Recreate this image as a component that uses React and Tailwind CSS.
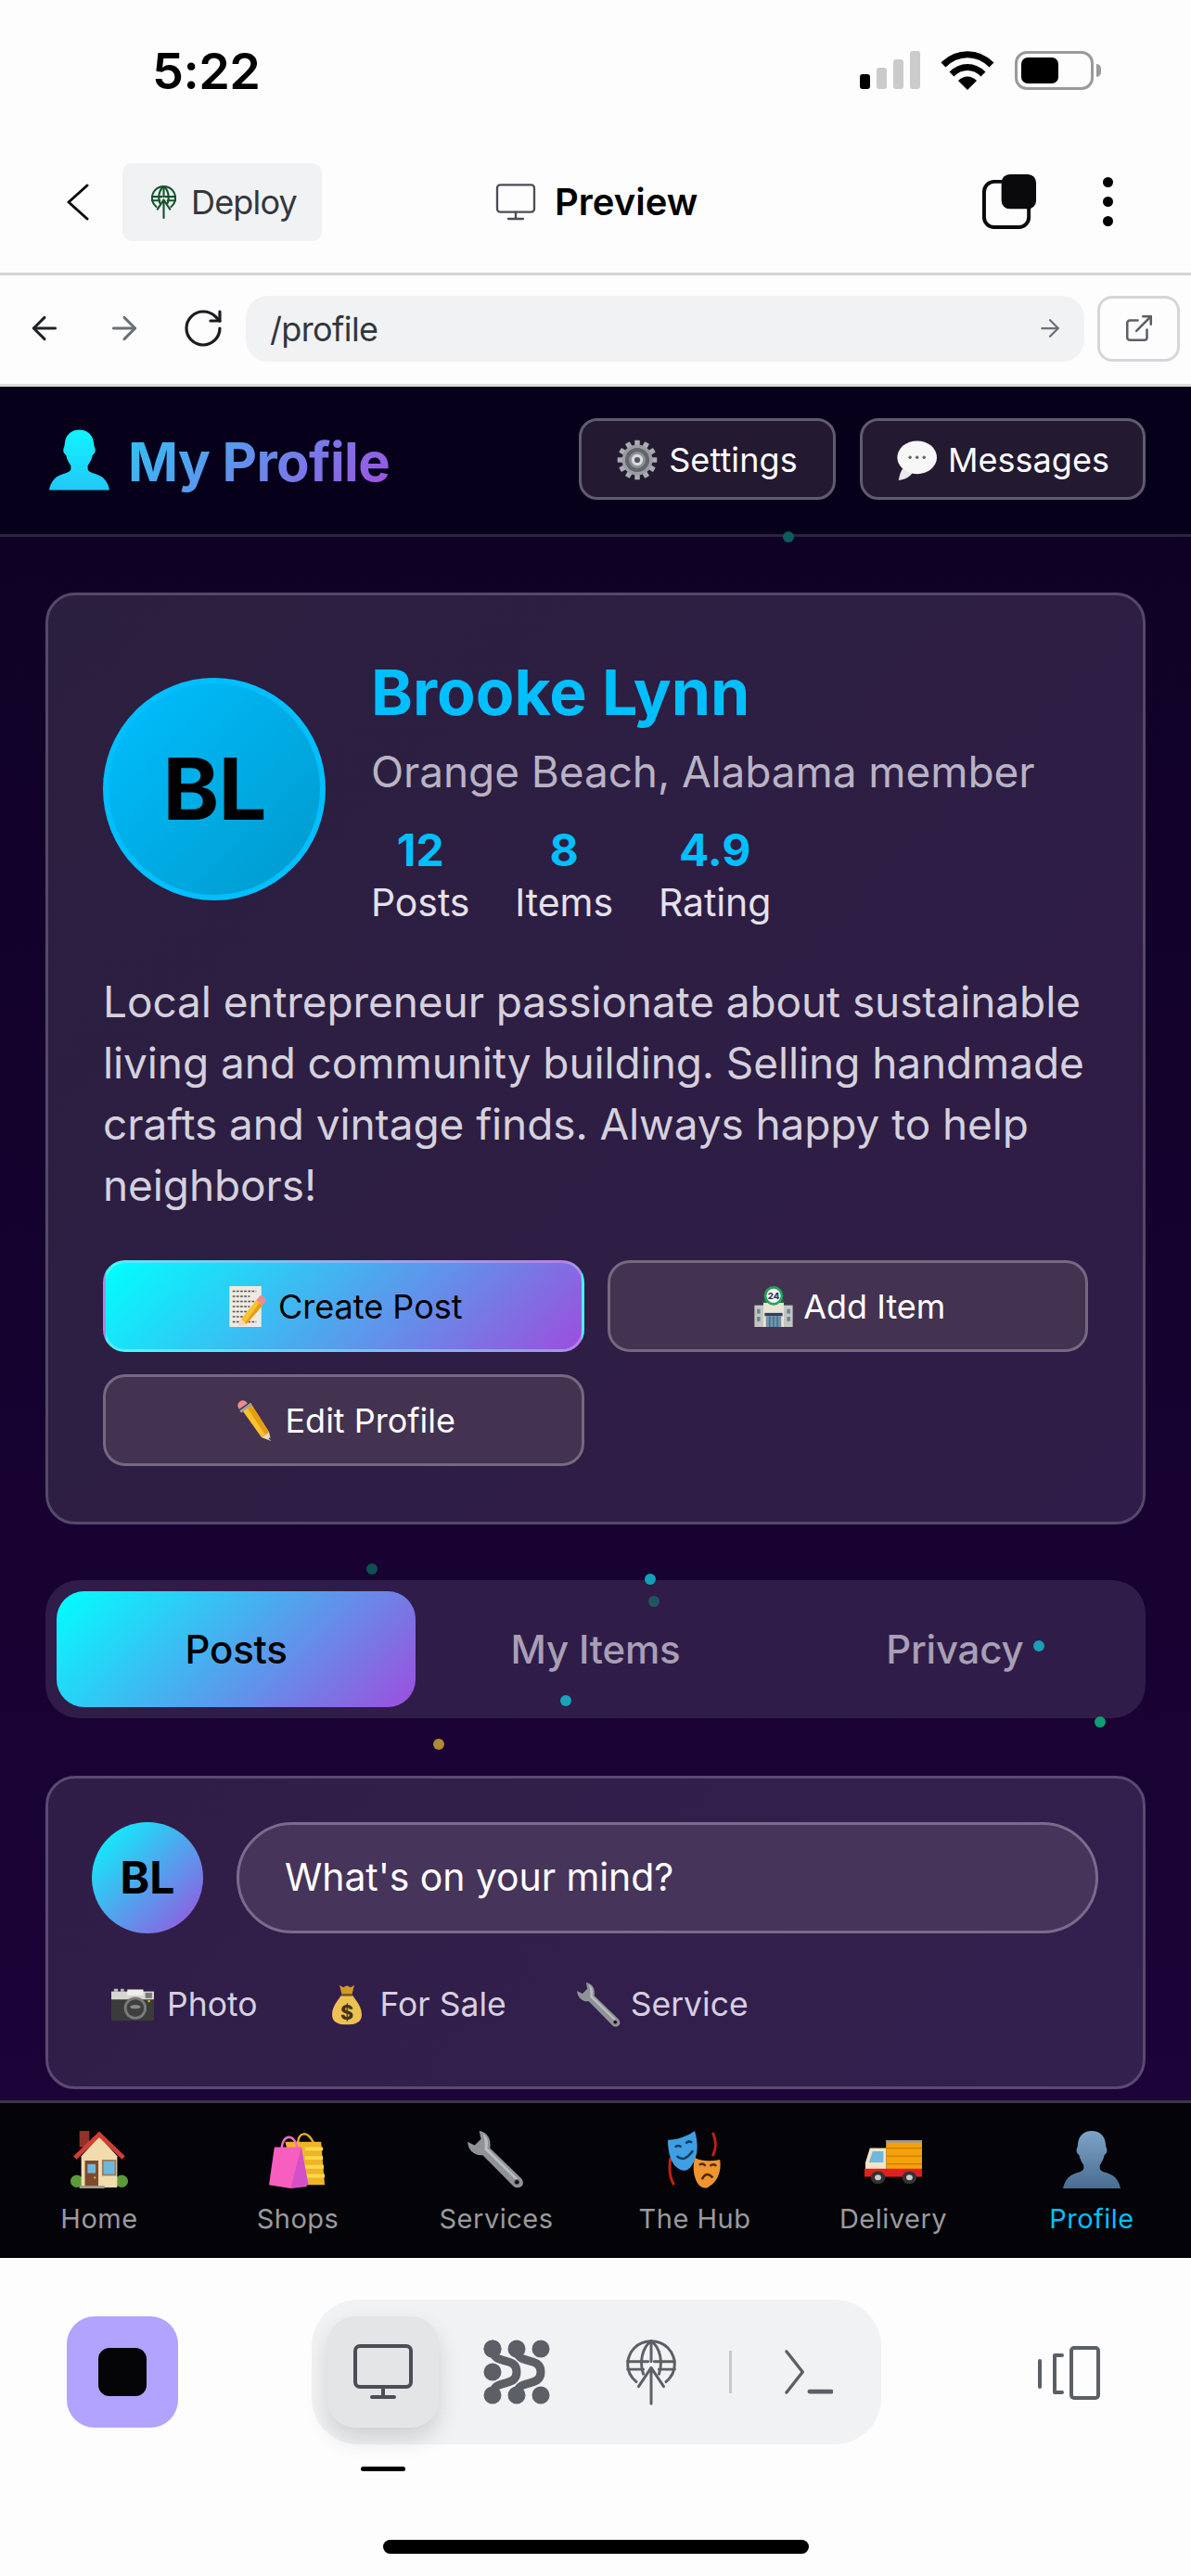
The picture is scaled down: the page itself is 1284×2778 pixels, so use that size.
import { ArrowLeft, ArrowRight, RotateCw, ExternalLink } from "lucide-react";

const Person = ({ className, from = "#10f4ff", to = "#22c8f8", id = "p" }) => (
  <svg viewBox="0 0 64 64" className={className}>
    <defs>
      <linearGradient id={id} x1="0" y1="0" x2="0" y2="1">
        <stop offset="0" stopColor={from} />
        <stop offset="1" stopColor={to} />
      </linearGradient>
    </defs>
    <path
      fill={`url(#${id})`}
      d="M32 0C23 0 17 6 16.500 15C16.500 18 15 19 15 22C15 25 17 26 18 27C19 32 21 35 23 38V42C22 46 14 46 8 50C4 53 1 58 0 64H64C63 58 60 53 56 50C50 46 42 46 41 42V38C43 35 45 32 46 27C47 26 49 25 49 22C49 19 47.500 18 47.500 15C47 6 41 0 32 0Z"
    />
  </svg>
);

const Gear = ({ className }) => (
  <svg viewBox="0 0 64 64" className={className}>
    <g fill="#a9adb2">
      {[0, 30, 60, 90, 120, 150, 180, 210, 240, 270, 300, 330].map((a) => (
        <rect key={a} x="28" y="1" width="8" height="12" rx="1" transform={`rotate(${a} 32 32)`} />
      ))}
    </g>
    <circle cx="32" cy="32" r="24" fill="#9a9ea4" />
    <circle cx="32" cy="32" r="19" fill="#63666c" />
    <circle cx="32" cy="32" r="13" fill="#8d9096" />
    <circle cx="32" cy="32" r="9" fill="#d8dade" />
    <circle cx="32" cy="32" r="4.500" fill="#55585e" />
  </svg>
);

const Bubble = ({ className }) => (
  <svg viewBox="0 0 64 64" className={className}>
    <path fill="#e9e9ec" d="M10 46C6 52 5 60 4 64C14 63 22 58 26 52Z" />
    <ellipse cx="33" cy="28" rx="31" ry="26" fill="#f7f7f8" />
    <circle cx="22" cy="28" r="2.500" fill="#666" />
    <circle cx="33" cy="28" r="2.500" fill="#666" />
    <circle cx="44" cy="28" r="2.500" fill="#666" />
  </svg>
);

const Pencil = ({ className }) => (
  <svg viewBox="0 0 64 64" className={className}>
    <path fill="#f9c22e" d="M12 16L26 6L54 50L42 58Z" />
    <path fill="#e59e12" d="M19 11L26 6L54 50L48 54Z" />
    <path fill="#f1d9b4" d="M42 58L54 50L57 64Z" />
    <path fill="#3a3a3a" d="M53 60L56 58L57 64Z" />
    <path fill="#9da1a6" d="M9 18L23 8L26 6L12 16Z" stroke="#9da1a6" strokeWidth="4" />
    <path fill="#f08a8f" d="M7 14L20 5C17 0 12 -1 8 2C4 5 4 10 7 14Z" />
  </svg>
);

const Memo = ({ className }) => (
  <svg viewBox="0 0 64 64" className={className}>
    <rect x="2" y="0" width="50" height="64" fill="#eeeae2" />
    {[8, 16, 24, 32, 40, 48, 56].map((y, i) => (
      <path key={y} d={`M7 ${y}H${i % 2 ? 34 : 44}`} stroke="#56524c" strokeWidth="2" strokeDasharray="4 2" />
    ))}
    <path fill="#f9c22e" d="M20 52L44 22L54 30L28 60Z" />
    <path fill="#e59e12" d="M27 57L49 26L54 30L28 60Z" />
    <path fill="#f08a8f" d="M44 22L50 15C54 14 59 19 59 23L54 30Z" />
    <path fill="#f1d9b4" d="M20 52L28 60L16 63Z" />
  </svg>
);

const Hotel = ({ className }) => (
  <svg viewBox="0 0 64 64" className={className}>
    <rect x="2" y="30" width="60" height="34" fill="#c3c6bd" />
    <rect x="16" y="26" width="32" height="38" fill="#e9e4d3" />
    <rect x="6" y="36" width="5" height="7" fill="#65839a" />
    <rect x="6" y="48" width="5" height="7" fill="#65839a" />
    <rect x="53" y="36" width="5" height="7" fill="#65839a" />
    <rect x="53" y="48" width="5" height="7" fill="#65839a" />
    <rect x="18" y="42" width="28" height="5" fill="#2d3f63" />
    <rect x="20" y="47" width="24" height="17" fill="#6c95ad" />
    <path d="M26 47V64M32 47V64M38 47V64" stroke="#3f5a70" strokeWidth="1.500" />
    <path d="M14 26H50L46 20H18Z" fill="#1f6a42" />
    <circle cx="32" cy="15" r="15" fill="#25a25a" />
    <circle cx="32" cy="15" r="11" fill="#f4f4f4" />
    <text x="32" y="20" textAnchor="middle" fontSize="14" fontWeight="800" fill="#2d3560" fontFamily="Inter, sans-serif">24</text>
  </svg>
);

const Camera = ({ className }) => (
  <svg viewBox="0 0 64 48" className={className}>
    <rect x="4" y="0" width="6" height="6" fill="#bbb" />
    <rect x="14" y="0" width="5" height="6" fill="#bbb" />
    <rect x="0" y="4" width="64" height="44" rx="2" fill="#3b3b3b" />
    <rect x="0" y="4" width="64" height="12" fill="#d6d6d2" />
    <rect x="24" y="1" width="24" height="9" fill="#efefe9" />
    <rect x="51" y="6" width="10" height="8" fill="#777" />
    <circle cx="36" cy="29" r="17" fill="#7b7b7b" />
    <circle cx="36" cy="29" r="13" fill="#3f3f3f" />
    <ellipse cx="36" cy="27" rx="8" ry="3" fill="#8a8a8a" />
    <rect x="55" y="17" width="3" height="3" fill="#e6b62d" />
  </svg>
);

const MoneyBag = ({ className }) => (
  <svg viewBox="0 0 48 64" className={className}>
    <path fill="#d19a2a" d="M12 0L18 4L24 1L30 4L36 0L32 16H16Z" />
    <path fill="#edc252" d="M16 15H32C38 24 48 34 48 48C48 60 38 64 24 64C10 64 0 60 0 48C0 34 10 24 16 15Z" />
    <path fill="#7b5a1c" d="M15 14H33V18H15Z" />
    <text x="24" y="56" textAnchor="middle" fontSize="32" fontWeight="800" fill="#3f3520" fontFamily="Inter, sans-serif">$</text>
  </svg>
);

const Wrench = ({ className }) => (
  <svg viewBox="0 0 64 64" className={className}>
    <path
      fill="#8f9398"
      d="M13 0C21 1 27 8 25 19L60 53C63 57 62 61 59 62.500C55 64 52 63 50 60.500L17 27C8 28 1 22 0 12L8 16L15 9Z"
    />
    <path fill="#b9bdc2" d="M17 3C22 6 24 12 22 19L57 54L54 55L19 21C20 15 19 8 17 3Z" />
    <circle cx="55" cy="57" r="2.800" fill="#140a20" stroke="#6d7075" strokeWidth="1" />
  </svg>
);

const House = ({ className }) => (
  <svg viewBox="0 0 64 64" className={className}>
    <circle cx="7" cy="56" r="7" fill="#5c9a3a" />
    <circle cx="57" cy="56" r="7" fill="#5c9a3a" />
    <rect x="10" y="0" width="11" height="18" fill="#8f3328" />
    <path fill="#f2dcae" d="M12 28L32 6L52 28V63H12Z" />
    <path fill="none" stroke="#d13f33" strokeWidth="5" d="M5 30L32 4L59 30" />
    <rect x="16" y="33" width="15" height="30" fill="#7d4a2e" />
    <rect x="19" y="37" width="9" height="10" fill="#6fb8dc" />
    <circle cx="27" cy="52" r="1.200" fill="#e2b43a" />
    <rect x="35" y="32" width="16" height="18" fill="#9a8060" />
    <rect x="37" y="34" width="12" height="14" fill="#6fb8dc" />
    <rect x="10" y="61" width="28" height="3" fill="#9b9b8f" />
  </svg>
);

const Bags = ({ className }) => (
  <svg viewBox="0 0 64 64" className={className}>
    <path fill="none" stroke="#e8a82a" strokeWidth="2.500" d="M32 14C33 2 42 -2 50 14" />
    <path fill="#f0b428" d="M18 12H58L62 60H30Z" />
    <path d="M40 20H60M40 30H60M40 40H61M40 50H62" stroke="#f7d94a" strokeWidth="4" />
    <path fill="none" stroke="#f070c0" strokeWidth="2.500" d="M14 22C14 2 30 2 32 22" />
    <path fill="#f75fbe" d="M6 18H36L42 62L24 64L0 60Z" />
    <path fill="#d44fc8" d="M36 18L44 60L24 64Z" />
  </svg>
);

const Masks = ({ className }) => (
  <svg viewBox="0 0 64 64" className={className}>
    <path d="M5 30C3 42 4 52 9 60M52 2C56 10 56 20 52 28" fill="none" stroke="#c4210f" strokeWidth="3" />
    <path fill="#3f9fe2" d="M2 10C12 10 24 6 32 0C36 14 36 26 30 36C26 44 20 46 14 42C6 38 2 24 2 10Z" />
    <path d="M10 18Q14 15 17 18M22 14Q25 10 29 13M12 28Q20 36 30 22" stroke="#123a60" strokeWidth="2.500" fill="none" />
    <path fill="#ee9430" d="M32 30C40 34 50 34 60 32C62 44 58 56 48 62C42 66 36 62 33 54C30 46 30 38 32 30Z" />
    <path d="M37 38Q41 35 44 39M49 39Q53 36 56 39M40 54Q45 44 52 52" stroke="#50280a" strokeWidth="2.500" fill="none" />
  </svg>
);

const Truck = ({ className }) => (
  <svg viewBox="0 0 64 56" preserveAspectRatio="none" className={className}>
    <rect x="24" y="0" width="40" height="42" fill="#f5a10a" />
    <path d="M24 10H64M24 20H64M24 30H64" stroke="#c97c06" strokeWidth="1.500" />
    <rect x="24" y="0" width="40" height="3" fill="#9a9a9a" />
    <path fill="#f4e3c6" d="M6 10H24V40H1V28Z" />
    <path fill="#6fb8dc" d="M9 14H21V28H5Z" />
    <path fill="#e01f1f" d="M0 36H64V46H0Z" />
    <circle cx="15" cy="47" r="8" fill="#333" />
    <circle cx="15" cy="47" r="3.500" fill="#ccc" />
    <circle cx="50" cy="47" r="8" fill="#333" />
    <circle cx="50" cy="47" r="3.500" fill="#ccc" />
  </svg>
);

const DeployGlobe = ({ className, color, sw = 4 }) => (
  <svg viewBox="0 0 64 84" className={className} fill="none" stroke={color} strokeWidth={sw} strokeLinecap="round" strokeLinejoin="round">
    <path d="M13 54C6 48 2 40 2 32C2 15 15 2 32 2C49 2 62 15 62 32C62 40 58 48 51 54" />
    <path d="M2 28H28M36 28H62M2 38H22M42 38H62" />
    <path d="M22 44C17 30 20 10 32 2C44 10 47 30 42 44" />
    <path d="M32 2V28" />
    <path d="M32 82V36M16 60L32 36L48 60" />
  </svg>
);

const Monitor = ({ className, sw = 4 }) => (
  <svg viewBox="0 0 64 60" className={className} fill="none" stroke="#4b4e55" strokeWidth={sw} strokeLinecap="round" strokeLinejoin="round">
    <rect x="2" y="2" width="60" height="44" rx="5" />
    <path d="M32 46V56M20 57H44" />
  </svg>
);

const Blobs = ({ className }) => (
  <svg viewBox="0 0 72 72" className={className} fill="none" stroke="#5c5f66" strokeLinecap="round">
    <g strokeWidth="19">
      <path d="M10 11V11.100M62 11V11.100M10 36V36.100M62 61V61.100" />
    </g>
    <g strokeWidth="9">
      <path d="M10 11C10 30 36 18 36 36C36 54 10 42 10 61" />
      <path d="M36 11C36 30 62 18 62 36C62 54 36 42 36 61" />
    </g>
    <g strokeWidth="19">
      <path d="M10 11V11.100M36 11V11.100M10 61V61.100M36 61V61.100" />
    </g>
  </svg>
);

const tabs = ["Posts", "My Items", "Privacy"];

const navItems = [
  { label: "Home", Icon: House, size: "w-[62px] h-[62px]" },
  { label: "Shops", Icon: Bags, size: "w-[62px] h-[62px]" },
  { label: "Services", Icon: Wrench, size: "w-[62px] h-[62px]" },
  { label: "The Hub", Icon: Masks, size: "w-[62px] h-[62px]" },
  { label: "Delivery", Icon: Truck, size: "w-[62px] h-[48px] mb-[4px]" },
];

const particles = [
  "left-[844px] -top-[6px] bg-[#0e5a5e]",
  "left-[395px] top-[1107px] bg-[#0e4f52]",
  "left-[695px] top-[1118px] bg-[#12a0b8]",
  "left-[699px] top-[1142px] bg-[#22545e]",
  "left-[1114px] top-[1190px] bg-[#1b9fb5]",
  "left-[604px] top-[1249px] bg-[#1aa2b8]",
  "left-[1180px] top-[1272px] bg-[#0f9f70]",
  "left-[467px] top-[1296px] bg-[#b08a35]",
];

const Stat = ({ value, label }) => (
  <div className="flex flex-col items-center">
    <div className="text-[48px] leading-[58px] font-bold text-[#00bfff]">{value}</div>
    <div className="text-[41px] leading-[54px] tracking-[-0.1px] text-[#e4e1ea]">{label}</div>
  </div>
);

export default function App() {
  return (
    <div className="w-[1284px] h-[2778px] overflow-hidden flex flex-col bg-[#fdfdfd] font-['Inter',sans-serif]">
      {/* status bar */}
      <div className="h-[165px] flex items-start justify-between pl-[164px] pr-[97px] pt-[47px]">
        <span className="text-[54px] leading-[60px] font-semibold tracking-[-0.5px] text-black">5:22</span>
        <div className="flex items-start gap-[22px] pt-[8px]">
          <div className="flex items-end gap-[7px] h-[41px]">
            <div className="w-[11px] h-[16px] rounded-[3px] bg-black" />
            <div className="w-[11px] h-[23px] rounded-[3px] bg-[#cbcbcb]" />
            <div className="w-[11px] h-[32px] rounded-[3px] bg-[#cbcbcb]" />
            <div className="w-[11px] h-[41px] rounded-[3px] bg-[#cbcbcb]" />
          </div>
          <svg viewBox="0 0 58 42" className="w-[58px] h-[42px]" fill="none" stroke="#000" strokeWidth="7">
            <path d="M3 15C18 0 40 0 55 15" />
            <path d="M12 25C22 15 36 15 46 25" />
            <path d="M19 32L29 42L39 32C33 26 25 26 19 32Z" fill="#000" stroke="none" />
          </svg>
          <div className="flex items-center">
            <div className="w-[85px] h-[42px] rounded-[13px] border-[3px] border-[#9a9a9a] p-[4px]">
              <div className="w-[40px] h-full rounded-[7px] bg-black" />
            </div>
            <div className="w-[5px] h-[14px] rounded-r-[5px] bg-[#9a9a9a] ml-[3px]" />
          </div>
        </div>
      </div>

      {/* top bar */}
      <div className="h-[132px] border-b-[3px] border-[#d4d4d4] flex items-start pt-[11px]">
        <svg viewBox="0 0 26 40" className="w-[26px] h-[40px] mt-[22px] ml-[71px]" fill="none" stroke="#0a0a0c" strokeWidth="3" strokeLinecap="round" strokeLinejoin="round">
          <path d="M23 2L3 20L23 38" />
        </svg>
        <div className="ml-[35px] w-[215px] h-[84px] rounded-[10px] bg-[#f1f2f4] flex items-center pl-[31px] gap-[16px]">
          <DeployGlobe className="w-[27px] h-[36px]" color="#14532d" sw={5} />
          <span className="text-[36px] tracking-[-0.8px] text-[#33363c]">Deploy</span>
        </div>
        <div className="ml-[187px] flex items-center gap-[20px] h-[84px]">
          <Monitor className="w-[44px] h-[40px]" sw={3.500} />
          <span className="text-[40px] font-semibold text-black">Preview</span>
        </div>
        <div className="ml-auto mr-[84px] flex items-center gap-[71px] h-[84px] mt-[-1px]">
          <svg viewBox="0 0 60 60" className="w-[59px] h-[59px]">
            <rect x="2" y="8" width="49" height="50" rx="11" fill="none" stroke="#0a0a0c" strokeWidth="4" />
            <rect x="21" y="0" width="38" height="38" rx="9" fill="#0a0a0c" />
          </svg>
          <div className="flex flex-col gap-[10px]">
            <div className="w-[11px] h-[11px] rounded-full bg-black" />
            <div className="w-[11px] h-[11px] rounded-full bg-black" />
            <div className="w-[11px] h-[11px] rounded-full bg-black" />
          </div>
        </div>
      </div>

      {/* url row */}
      <div className="h-[120px] border-b-[3px] border-[#dcdcdc] flex items-center pl-[28px] pr-[12px] pb-[3px]">
        <ArrowLeft className="w-[40px] h-[40px] text-[#1f2126]" strokeWidth={1.8} />
        <ArrowRight className="w-[40px] h-[40px] ml-[46px] text-[#6b6f76]" strokeWidth={1.8} />
        <RotateCw className="w-[48px] h-[48px] ml-[41px] text-[#1a1c20]" strokeWidth={1.6} />
        <div className="ml-[22px] w-[905px] h-[71px] rounded-[24px] bg-[#f1f2f4] flex items-center justify-between pl-[26px] pr-[22px]">
          <span className="text-[36px] tracking-[-0.6px] mt-[2px] text-[#33363c]">/profile</span>
          <ArrowRight className="w-[30px] h-[30px] text-[#6b6f76]" strokeWidth={1.8} />
        </div>
        <div className="ml-[14px] w-[89px] h-[71px] rounded-[16px] border-[3px] border-[#d4d6da] flex items-center justify-center">
          <ExternalLink className="w-[34px] h-[34px] text-[#5c5f66]" strokeWidth={1.8} />
        </div>
      </div>

      {/* app */}
      <div className="h-[2018px] flex flex-col overflow-hidden">
        <header className="h-[162px] shrink-0 border-b-[3px] border-[#2b2440] bg-[#07001a] flex items-center justify-between pl-[53px] pr-[49px] pb-[3px]">
          <div className="flex items-center gap-[20px] mt-[5px]">
            <Person className="w-[65px] h-[66px] mb-[4px]" id="headerPerson" />
            <h1 className="text-[58px] leading-[70px] font-bold tracking-[-0.6px] text-transparent bg-clip-text bg-[linear-gradient(135deg,#2ec4f5,#a050e0)]">
              My Profile
            </h1>
          </div>
          <div className="flex items-center gap-[26px]">
            <button className="w-[277px] h-[88px] pt-[2px] rounded-[20px] border-[3px] border-[#625a6e] bg-[#231a31] flex items-center justify-center gap-[12px] text-[36px] tracking-[0.1px] text-white">
              <Gear className="w-[44px] h-[44px]" />
              Settings
            </button>
            <button className="w-[308px] h-[88px] pt-[2px] rounded-[20px] border-[3px] border-[#625a6e] bg-[#231a31] flex items-center justify-center gap-[12px] text-[36px] text-white">
              <Bubble className="w-[44px] h-[44px]" />
              Messages
            </button>
          </div>
        </header>

        <main className="relative flex-1 min-h-0 bg-[linear-gradient(180deg,#0f0126,#1c0338)] px-[49px] pt-[60px]">
          {particles.map((p) => (
            <div key={p} className={`absolute z-10 w-[12px] h-[12px] rounded-full ${p}`} />
          ))}

          {/* profile card */}
          <section className="relative rounded-[32px] border-[3px] border-[#55486a] bg-[linear-gradient(135deg,#2b1f3f,#301c48)] px-[59px] pt-[60px] pb-[60px]">
            <div className="flex items-center gap-[49px]">
              <div className="w-[240px] h-[240px] shrink-0 rounded-full border-[6px] border-[#00bfff] bg-[linear-gradient(135deg,#00bfff,#0099cc)] flex items-center justify-center text-[92px] font-bold tracking-[-1px] text-black">
                BL
              </div>
              <div>
                <h2 className="text-[68px] leading-[88px] font-bold text-[#00bfff]">Brooke Lynn</h2>
                <p className="text-[46px] leading-[66px] mt-[9px] tracking-[-0.1px] text-[#b8b3c4]">Orange Beach, Alabama member</p>
                <div className="flex gap-[49px] mt-[23px]">
                  <Stat value="12" label="Posts" />
                  <Stat value="8" label="Items" />
                  <Stat value="4.9" label="Rating" />
                </div>
              </div>
            </div>

            <p className="mt-[47px] text-[46px] leading-[66px] tracking-[-0.1px] whitespace-nowrap text-[#d4d1dc]">
              Local entrepreneur passionate about sustainable<br />
              living and community building. Selling handmade<br />
              crafts and vintage finds. Always happy to help<br />
              neighbors!
            </p>

            <div className="mt-[48px] grid grid-cols-2 gap-x-[25px] gap-y-[24px]">
              <button className="h-[99px] rounded-[24px] border-[3px] border-[#ffffff44] bg-[linear-gradient(135deg,#00ffff,#9d4edd)] flex items-center justify-center gap-[10px] pl-[4px] text-[36px] text-black">
                <Memo className="w-[44px] h-[44px]" />
                Create Post
              </button>
              <button className="h-[99px] rounded-[24px] border-[3px] border-[#75697f] bg-[#433350] flex items-center justify-center gap-[10px] pl-[4px] text-[36px] text-white">
                <Hotel className="w-[44px] h-[44px]" />
                Add Item
              </button>
              <button className="h-[99px] rounded-[24px] border-[3px] border-[#75697f] bg-[#433350] flex items-center justify-center gap-[10px] pl-[4px] text-[36px] text-white">
                <Pencil className="w-[44px] h-[44px]" />
                Edit Profile
              </button>
            </div>
          </section>

          {/* tabs */}
          <nav className="relative mt-[60px] h-[149px] rounded-[36px] bg-[#301c48] p-[12px] grid grid-cols-3">
            {tabs.map((tab, i) => (
              <div
                key={tab}
                className={
                  i === 0
                    ? "rounded-[30px] bg-[linear-gradient(135deg,#00ffff,#9d4edd)] flex items-center justify-center text-[42px] tracking-[-0.2px] font-medium text-black"
                    : "flex items-center justify-center text-[42px] tracking-[-0.2px] font-medium text-[#a89fb4]"
                }
              >
                {tab}
              </div>
            ))}
          </nav>

          {/* composer */}
          <section className="relative mt-[62px] rounded-[32px] border-[3px] border-[#5a4a72] bg-[linear-gradient(135deg,#301d46,#34204f)] pl-[47px] pr-[48px] pt-[47px] pb-[63px]">
            <div className="flex items-center gap-[36px]">
              <div className="w-[120px] h-[120px] shrink-0 rounded-full bg-[linear-gradient(135deg,#00ffff,#9d4edd)] flex items-center justify-center text-[48px] font-bold text-black">
                BL
              </div>
              <div className="flex-1 h-[120px] rounded-full border-[3px] border-[#7a6a8c] bg-[#46345a] flex items-center pl-[49px] text-[41px] tracking-[-0.1px] text-white">
                What's on your mind?
              </div>
            </div>
            <div className="mt-[52px] flex items-center pl-[21px] text-[35.500px] leading-[50px] text-[#d6d0e0]">
              <Camera className="w-[46px] h-[36px] mr-[14px]" />
              Photo
              <MoneyBag className="w-[32px] h-[46px] ml-[80px] mr-[20px]" />
              For Sale
              <Wrench className="w-[48px] h-[48px] ml-[76px] mr-[10px]" />
              Service
            </div>
          </section>
        </main>

        {/* bottom nav */}
        <nav className="h-[170px] shrink-0 border-t-[3px] border-[#3a3a42] bg-[#030308] grid grid-cols-6">
          {navItems.map(({ label, Icon, size }) => (
            <div key={label} className="flex flex-col items-center">
              <div className="h-[92px] flex items-end justify-center">
                <Icon className={size} />
              </div>
              <span className="mt-[13px] text-[29px] leading-[40px] tracking-[0.5px] text-[#9a9a9e]">{label}</span>
            </div>
          ))}
          <div className="flex flex-col items-center">
            <div className="h-[92px] flex items-end justify-center">
              <Person className="w-[62px] h-[62px]" from="#7ca4c8" to="#4a6c90" id="navPerson" />
            </div>
            <span className="mt-[13px] text-[29px] leading-[40px] tracking-[0.5px] text-[#00bfff]">Profile</span>
          </div>
        </nav>
      </div>

      {/* bottom toolbar */}
      <div className="relative flex-1 flex items-start pt-[45px] pl-[72px]">
        <div className="mt-[18px] w-[120px] h-[120px] rounded-[30px] bg-[#b1a3ff] flex items-center justify-center">
          <div className="w-[52px] h-[52px] rounded-[12px] bg-[#050508]" />
        </div>
        <div className="ml-[144px] w-[614px] h-[156px] rounded-[50px] bg-[#f1f2f4] flex items-center pl-[17px]">
          <div className="w-[120px] h-[120px] shrink-0 rounded-[30px] bg-[#e4e5e7] shadow-[0_12px_24px_rgba(0,0,0,0.14)] flex items-center justify-center">
            <Monitor className="w-[64px] h-[60px]" />
          </div>
          <Blobs className="ml-[48px] shrink-0 w-[72px] h-[72px]" />
          <DeployGlobe className="ml-[82px] shrink-0 w-[54px] h-[71px]" color="#5c5f66" sw={3.500} />
          <div className="ml-[57px] shrink-0 w-[3px] h-[46px] bg-[#c8c9cc]" />
          <svg viewBox="0 0 54 50" className="ml-[57px] shrink-0 w-[52px] h-[48px]" fill="none" stroke="#5c5f66" strokeWidth="3.500" strokeLinecap="round" strokeLinejoin="round">
            <path d="M2 2L20 25L2 48" />
            <path d="M28 47H52" strokeWidth="5" />
          </svg>
        </div>
        <svg viewBox="0 0 68 58" className="absolute left-[1118px] top-[95px] w-[68px] h-[58px]" fill="none" stroke="#5c5f66" strokeWidth="4" strokeLinecap="round" strokeLinejoin="round">
          <rect x="37" y="2" width="29" height="54" rx="3" />
          <path d="M27 10H19V50H27M3 16V44" />
        </svg>
        <div className="absolute left-[389px] top-[225px] w-[48px] h-[5px] rounded-full bg-black" />
        <div className="absolute left-[413px] top-[304px] w-[459px] h-[15px] rounded-full bg-black" />
      </div>
    </div>
  );
}
